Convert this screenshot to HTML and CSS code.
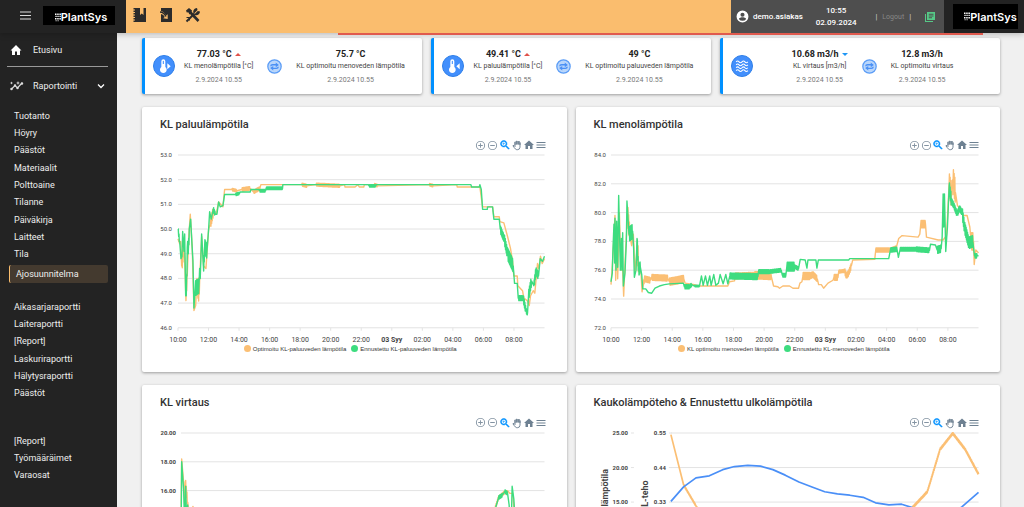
FILE: index.html
```html
<!DOCTYPE html>
<html lang="fi">
<head>
  <meta charset="UTF-8" />
  <meta name="viewport" content="width=device-width, initial-scale=1" />
  <title>PlantSys - Ajosuunnitelma</title>
  <link rel="stylesheet" href="styles.css">
</head>
<body>
  <!-- Shared icons -->
  <svg class="sprite" aria-hidden="true">
    <symbol id="i-dots" viewBox="0 0 6 9">
      <path d="M0 .5h1.5v1.5H0zM2.2 .5h1.5v1.5H2.2zM4.4 .5h1.5v1.5H4.4zM.4 2.8h1.3v1.3H.4zM2.4 2.8h1.3v1.3H2.4zM4.5 2.8h1.3v1.3H4.5zM0 5.1h1.5v1.5H0zM2.2 5.1h1.5v1.5H2.2zM4.4 5.1h1.5v1.5H4.4zM.6 7.3h1v1h-1zM2.6 7.3h1v1h-1z"/>
    </symbol>
    <symbol id="i-swap" viewBox="0 0 24 24">
      <circle cx="12" cy="12" r="10.7" fill="#b9d6fb" stroke="#5a9cf6" stroke-width="2"/>
      <path d="M5 11.500q0-3.500 4-3.500h5V5.500l5 4-5 3.500v-2.800H9q-2 0-2 1.300zM19 12.500q0 3.500-4 3.500h-5v2.500l-5-4 5-3.500v2.800h5q2 0 2-1.300z" fill="#4a90f5"/>
    </symbol>
    <symbol id="i-plus" viewBox="0 0 24 24">
      <path d="M13 7h-2v4H7v2h4v4h2v-4h4v-2h-4V7zm-1-5a10 10 0 1 0 0 20 10 10 0 0 0 0-20zm0 18a8 8 0 1 1 0-16 8 8 0 0 1 0 16z"/>
    </symbol>
    <symbol id="i-minus" viewBox="0 0 24 24">
      <path d="M7 11v2h10v-2H7zm5-9a10 10 0 1 0 0 20 10 10 0 0 0 0-20zm0 18a8 8 0 1 1 0-16 8 8 0 0 1 0 16z"/>
    </symbol>
    <symbol id="i-zoom" viewBox="0 0 24 24">
      <path d="M15.5 14h-.8l-.3-.3A6.5 6.5 0 1 0 13.7 14.4l.3.3v.8l5 5 1.5-1.5-5-5zm-6 0a4.5 4.5 0 1 1 0-9 4.5 4.5 0 0 1 0 9z" stroke="currentColor"/>
      <path d="M12 10h-2v2H9v-2H7V9h2V7h1v2h2v1z"/>
    </symbol>
    <symbol id="i-hand" viewBox="0 0 24 24">
      <path d="M8 12V5.500M11.300 11V3.500M14.600 11V4.500M18 12V7v9.500A5.500 5.500 0 0 1 12.500 21.500C9.500 21.500 8 19.500 3.800 13.500L6 12.800l2 2.400V6" fill="none" stroke="currentColor" stroke-width="1.900"/>
      <path d="M9 4h9v7H9z" opacity=".7"/>
    </symbol>
    <symbol id="i-home" viewBox="0 0 24 24">
      <path d="M10 20v-6h4v6h5v-8h3L12 3 2 12h3v8z"/>
    </symbol>
    <symbol id="i-menu" viewBox="0 0 24 24">
      <path d="M3 6h18v2H3zM3 11h18v2H3zM3 16h18v2H3z"/>
    </symbol>
    <symbol id="i-thermo" viewBox="0 0 24 24">
      <path d="M14 13.500V5a3 3 0 0 0-6 0v8.500a5 5 0 1 0 6 0zM10.200 5a.8.8 0 0 1 1.600 0v4h-1.600z"/>
    </symbol>
  </svg>

  <header class="topbar">
    <div class="topbar-left">
      <button class="icon-btn" aria-label="Valikko">
        <svg width="11" height="9" viewBox="0 0 11 9"><path d="M0 1h11M0 4.500h11M0 8h11" stroke="#ddd" stroke-width="1.200"/></svg>
      </button>
      <a class="logo" href="#"><svg width="6" height="9"><use href="#i-dots"/></svg>PlantSys</a>
    </div>
    <nav class="topbar-tools">
      <button class="icon-btn" aria-label="Päiväkirja">
        <svg width="14" height="16" viewBox="0 0 14 16">
          <path d="M2 1h5v7l1.800-1.500L10.500 8V1H13v14H2z" fill="#2b2b2b"/>
          <path d="M1.500 1v14" stroke="#2b2b2b" stroke-width="2" stroke-dasharray="1.500 1"/>
        </svg>
      </button>
      <button class="icon-btn" aria-label="Kirjaudu">
        <svg width="14" height="16" viewBox="0 0 14 16">
          <path d="M2 1h11v14H2z" fill="#2b2b2b"/>
          <path d="M0 4c3-.5 5 .8 7 4.500l1.700-1.200V12l-4.500-.8 1.600-1.200C4.500 7.500 3 6.500 0 7z" fill="#fabd6e"/>
          <path d="M1 5c3 0 4.500 1.500 6 4.500" stroke="#2b2b2b" stroke-width="1.400" fill="none"/>
        </svg>
      </button>
      <button class="icon-btn" aria-label="Työkalut">
        <svg width="16" height="16" viewBox="0 0 16 16">
          <path d="M5 5l8.500 9" stroke="#2b2b2b" stroke-width="2.600"/>
          <path d="M1.500 14.500l8-8" stroke="#2b2b2b" stroke-width="2"/>
          <path d="M9 6.500L12.500 3l-.5-2c-2.800.3-4.300 2.700-3.500 5zM9.500 7.300l3.300-3.300 2.200.5c0 2.500-2.700 4.300-5 3.500z" fill="#2b2b2b"/>
          <path d="M1 3.500L4 1l3 2.500-.8 2.500-1.700 1.500L3.300 5.200 1.800 5.500z" fill="#2b2b2b"/>
          <path d="M1.500 10.500h3v3" stroke="#2b2b2b" fill="none"/>
        </svg>
      </button>
    </nav>
    <div class="topbar-user">
      <div class="user">
        <svg width="13" height="13" viewBox="0 0 24 24"><path d="M12 1a11 11 0 1 0 0 22 11 11 0 0 0 0-22zm0 4a3.800 3.800 0 1 1 0 7.600A3.800 3.800 0 0 1 12 5zm0 15a8 8 0 0 1-6.700-3.500c0-2.200 4.500-3.300 6.700-3.300s6.700 1.100 6.700 3.300A8 8 0 0 1 12 20z" fill="#fff"/></svg>
        demo.asiakas
      </div>
      <div class="clock"><span>10:55</span><span>02.09.2024</span></div>
      <div class="logout"><span>|</span><button>Logout</button><span>|</span></div>
      <button class="icon-btn" aria-label="Kirjasto">
        <svg width="12" height="12" viewBox="0 0 24 24"><path d="M4 6H2v16h16v-2H4zM6 2v16h16V2zm13 5.500H9.500v-2H19zm0 3.500H9.500V9H19zm-3 3.500H9.500v-2H16z" fill="#55c987"/></svg>
      </button>
    </div>
    <div class="topbar-brand">
      <a class="logo" href="#"><svg width="6" height="9"><use href="#i-dots"/></svg>PlantSys</a>
    </div>
    <div class="loading"></div>
  </header>

  <div class="layout">
    <aside class="sidebar">
      <a class="nav-main" href="#">
        <svg width="12" height="12" viewBox="0 0 24 24"><path d="M10 22v-7h4v7h6v-9h3L12 2 1 13h3v9z" fill="#fff"/></svg>
        Etusivu
      </a>
      <hr>
      <button class="nav-main nav-group">
        <svg width="14" height="12" viewBox="0 0 28 24">
          <path d="M3 18l7-7 5 5 9-10" fill="none" stroke="#ddd" stroke-width="2.400"/>
          <path d="M0.500 18a2.500 2.500 0 1 0 5 0 2.500 2.500 0 1 0-5 0M7.500 11a2.500 2.500 0 1 0 5 0 2.500 2.500 0 1 0-5 0M12.500 16a2.500 2.500 0 1 0 5 0 2.500 2.500 0 1 0-5 0M21.500 7a2.500 2.500 0 1 0 5 0 2.500 2.500 0 1 0-5 0M16 2l1.200 2.800L20 6l-2.800 1.200L16 10l-1.200-2.800L12 6l2.800-1.200zM3 3l1 2 2 1-2 1-1 2-1-2-2-1 2-1z" fill="#ddd"/>
        </svg>
        <span>Raportointi</span>
        <svg width="8" height="6" viewBox="0 0 8 6"><path d="M1 1.500l3 3 3-3" fill="none" stroke="#fff" stroke-width="1.300"/></svg>
      </button>

      <nav class="menu menu-nine">
        <a href="#">Tuotanto</a>
        <a href="#">Höyry</a>
        <a href="#">Päästöt</a>
        <a href="#">Materiaalit</a>
        <a href="#">Polttoaine</a>
        <a href="#">Tilanne</a>
        <a href="#">Päiväkirja</a>
        <a href="#">Laitteet</a>
        <a href="#">Tila</a>
      </nav>
      <a class="menu-active" href="#">Ajosuunnitelma</a>
      <nav class="menu menu-six">
        <a href="#">Aikasarjaraportti</a>
        <a href="#">Laiteraportti</a>
        <a href="#">[Report]</a>
        <a href="#">Laskuriraportti</a>
        <a href="#">Hälytysraportti</a>
        <a href="#">Päästöt</a>
      </nav>
      <nav class="menu menu-three">
        <a href="#">[Report]</a>
        <a href="#">Työmääräimet</a>
        <a href="#">Varaosat</a>
      </nav>
    </aside>

    <main class="content">
      <!-- Current values -->
      <section class="kpis">
        <div class="kpi">
          <span class="kpi-icon"><svg width="16" height="16" viewBox="0 0 24 24"><use href="#i-thermo"/><path d="M17 8l5 4.500-5 4.500z"/></svg></span>
          <div class="kpi-body">
            <div class="kpi-value"><b>77.03 °C <i class="up"></i></b><span>KL menolämpötila [°C]</span><time>2.9.2024 10.55</time></div>
            <svg width="15" height="15"><use href="#i-swap"/></svg>
            <div class="kpi-value"><b>75.7 °C</b><span>KL optimoitu menoveden lämpötila</span><time>2.9.2024 10.55</time></div>
          </div>
        </div>
        <div class="kpi">
          <span class="kpi-icon"><svg width="16" height="16" viewBox="0 0 24 24"><use href="#i-thermo"/><path d="M22 8l-5 4.500 5 4.500z"/></svg></span>
          <div class="kpi-body">
            <div class="kpi-value"><b>49.41 °C <i class="up"></i></b><span>KL paluulämpötila [°C]</span><time>2.9.2024 10.55</time></div>
            <svg width="15" height="15"><use href="#i-swap"/></svg>
            <div class="kpi-value"><b>49 °C</b><span>KL optimoitu paluuveden lämpötila</span><time>2.9.2024 10.55</time></div>
          </div>
        </div>
        <div class="kpi">
          <span class="kpi-icon"><svg width="14" height="14" viewBox="0 0 24 24"><path d="M2 5q2.500-3 5 0t5 0 5 0 5 0M2 10q2.500-3 5 0t5 0 5 0 5 0M2 15q2.500-3 5 0t5 0 5 0 5 0M2 20q2.500-3 5 0t5 0 5 0 5 0" fill="none" stroke="#fff" stroke-width="1.900"/></svg></span>
          <div class="kpi-body">
            <div class="kpi-value"><b>10.68 m3/h <i class="down"></i></b><span>KL virtaus [m3/h]</span><time>2.9.2024 10.55</time></div>
            <svg width="15" height="15"><use href="#i-swap"/></svg>
            <div class="kpi-value"><b>12.8 m3/h</b><span>KL optimoitu virtaus</span><time>2.9.2024 10.55</time></div>
          </div>
        </div>
      </section>

      <!-- Filled in by charts.js -->
      <section class="charts" id="charts"></section>
    </main>
  </div>

  <script src="charts.js"></script>
</body>
</html>
```
FILE: styles.css
```css
:root {
  --dark: #232323;
  --orange: #fabd6e;
  --blue: #0090ff;
  --bg: #f0f0f0;
  --muted: #6e8192;
}
* {
  box-sizing: border-box;
}
body {
  margin: 0;
  height: 100vh;
  display: flex;
  flex-direction: column;
  overflow: hidden;
  background: var(--bg);
  color: #333;
  font-family: Roboto, "Liberation Sans", sans-serif;
  font-size: 8px;
}
a {
  color: inherit;
  text-decoration: none;
}
button {
  background: none;
  border: none;
  padding: 0;
  color: inherit;
  font: inherit;
  cursor: pointer;
}
svg {
  display: block;
  flex: none;
}
.sprite {
  display: none;
}

/* Top bar */
.topbar {
  position: relative;
  z-index: 2;
  display: flex;
  flex: none;
  height: 33px;
  background: var(--orange);
  box-shadow: 0 1px 6px rgba(0,0,0,0.25);
}
.topbar-left {
  display: flex;
  align-items: center;
  gap: 12px;
  width: 126px;
  padding-left: 20px;
  padding-bottom: 2px;
  background: var(--dark);
}
.logo {
  display: flex;
  align-items: center;
  justify-content: center;
  width: 72px;
  height: 19px;
  padding-left: 4px;
  padding-top: 3px;
  background: #000;
  color: #fff;
  fill: #fff;
  font-family: Inter, sans-serif;
  font-size: 11px;
  font-weight: 600;
}
.topbar-tools {
  display: flex;
  flex: 1;
  align-items: center;
  gap: 12px;
  padding: 0 7px 4px;
}
.topbar-user {
  display: flex;
  align-items: center;
  justify-content: space-between;
  width: 213px;
  padding: 0 8px 0 5px;
  background: #4e4e4e;
  color: #fff;
  font-weight: 500;
}
.user {
  display: flex;
  align-items: center;
  gap: 4px;
}
.clock {
  display: flex;
  flex-direction: column;
  padding-right: 6px;
  line-height: 12px;
  text-align: center;
}
.logout {
  display: flex;
  gap: 5px;
  color: #ccc;
  font-weight: 400;
}
.logout button {
  color: #888;
  font-size: 7px;
}
.topbar-brand {
  display: flex;
  align-items: center;
  width: 80px;
  padding-left: 9px;
  background: var(--dark);
}
.topbar-brand .logo {
  width: 65px;
  height: 25px;
  padding-left: 10px;
  padding-top: 0;
}
.loading {
  position: absolute;
  top: 33px;
  left: 33%;
  right: 4%;
  height: 2px;
  background: #e05a4e;
}

.layout {
  display: flex;
  flex: 1;
  min-height: 0;
}

/* Sidebar */
.sidebar {
  flex: none;
  width: 117px;
  background: var(--dark);
  color: #eee;
  font-size: 9px;
}
.sidebar hr {
  margin: 0 9px 0 7px;
  border: none;
  border-top: 1px solid #999;
}
.nav-main {
  display: flex;
  align-items: center;
  gap: 11px;
  width: 100%;
  height: 33px;
  padding: 0 12px 0 10px;
}
.nav-group {
  height: 38px;
  gap: 9px;
  text-align: left;
}
.nav-group span {
  flex: 1;
}
.menu {
  display: grid;
  grid-auto-rows: 1fr;
  align-items: center;
  padding-left: 14px;
}
.menu-nine {
  height: 156px;
  margin-top: 2px;
}
.menu-six {
  height: 104px;
  margin-top: 15px;
}
.menu-three {
  height: 52px;
  margin-top: 30px;
}
.menu-active {
  display: block;
  margin: 2px 9px 0;
  padding-left: 6px;
  border-left: 1px solid var(--orange);
  border-radius: 2px;
  background: #443a2f;
  line-height: 18px;
}

/* Content */
.content {
  flex: 1;
  padding: 5px 24px 13px 25px;
  overflow-y: auto;
  scrollbar-width: none;
}
.kpis {
  display: grid;
  grid-template-columns: repeat(3, 1fr);
  gap: 9px;
  margin-bottom: 13px;
}
.kpi, .chart {
  background: #fff;
  border-radius: 2px;
  box-shadow: 0 1px 3px rgba(0,0,0,0.35);
}
.kpi {
  display: flex;
  align-items: center;
  height: 56px;
  padding: 0 8px;
  border-left: 3px solid var(--blue);
}
.kpi-icon {
  display: grid;
  place-items: center;
  width: 22px;
  height: 22px;
  border: 1px solid #2f7fe8;
  border-radius: 50%;
  background: #428ffc;
  fill: #fff;
}
.kpi-body {
  display: flex;
  flex: 1;
  align-items: center;
  justify-content: center;
  gap: 14px;
}
.kpi-value {
  display: flex;
  flex-direction: column;
  align-items: center;
  padding-top: 3px;
  font-size: 7px;
  line-height: 12px;
  color: #444;
}
.kpi-value b {
  color: #222;
  font-size: 9px;
}
.kpi-value time {
  line-height: 16px;
  color: #777;
}
.up, .down {
  display: inline-block;
  margin-left: 1px;
  vertical-align: middle;
  border: 3px solid transparent;
}
.up {
  border-top: none;
  border-bottom-color: #e0524a;
}
.down {
  border-bottom: none;
  border-top-color: #1e96f5;
}

/* Charts */
.charts {
  display: grid;
  grid-template-columns: repeat(2, 1fr);
  gap: 13px 9px;
}
.chart {
  padding: 11px 18px 18px;
}
.chart h2 {
  margin: 0;
  font-size: 11px;
  font-weight: 500;
  line-height: 14px;
}
.toolbar {
  display: flex;
  justify-content: flex-end;
  height: 12px;
  margin-top: 7px;
  padding-right: 2px;
  color: var(--muted);
  fill: currentColor;
}
.toolbar button {
  display: grid;
  place-items: center;
  width: 12px;
}
.toolbar svg {
  width: 12px;
  height: 12px;
}
.toolbar .round {
  opacity: 0.85;
}
.toolbar .round svg {
  width: 11px;
  height: 11px;
}
.toolbar .selected {
  color: var(--blue);
  fill: var(--blue);
}
.plot {
  width: 100%;
  height: auto;
  overflow: visible;
}
.plot text {
  fill: #444;
  font-size: 6px;
}
.plot .hour {
  font-size: 7px;
}
.plot .strong {
  font-weight: 700;
}
.plot .axis-title {
  font-size: 9px;
  font-weight: 700;
}
.grid-line {
  stroke: #e3e3e3;
}
.series {
  fill: none;
  stroke-linejoin: round;
}
.legend {
  display: flex;
  justify-content: center;
  gap: 5px;
  padding-right: 8px;
  font-family: "Liberation Sans", sans-serif;
  font-size: 6px;
  line-height: 10px;
}
.legend span {
  display: flex;
  align-items: center;
  gap: 2px;
}
.legend i {
  width: 7px;
  height: 7px;
  border-radius: 50%;
}
```
FILE: charts.js
```js
const ORANGE = '#fbbf74';
const GREEN = '#3ddc7f';
const BLUE = '#4a8ff7';
const TOP = 4;       // y of the topmost grid line
const HEIGHT = 173;  // distance to the bottom one
const RIGHT = 385;
const HOURS = ['10:00', '12:00', '14:00', '16:00', '18:00', '20:00', '22:00', '03 Syy', '02:00', '04:00', '06:00', '08:00'];

// Points are [sample, value] or [sample, value, swing], 46 samples an hour.
// With a swing the line goes up and down by that much on its way to the point.
const charts = [
  {
    title: 'KL paluulämpötila', left: 18, samples: 1101,
    axes: [{ x: 12, min: 46, max: 53, step: 1, digits: 1 }],
    series: [
      { name: 'Optimoitu KL-paluuveden lämpötila', color: ORANGE, points: [
        [0, 49.6], [5, 49.4], [8, 49.5], [11, 48.5], [17, 49.2, .3], [20, 48.8], [24, 47.1], [29, 48.6, .2], [33, 49.8], [37, 50.6], [43, 49.2], [48, 46.7], [53, 46.9], [57, 48], [60, 47.2], [65, 47.9, .4], [71, 49.7], [77, 48.5], [84, 48.4], [92, 50], [97, 50.2], [106, 50.7, .2], [115, 50.6], [122, 51.1], [135, 50.9], [140, 51.6], [162, 51.6], [177, 51.55, .05], [192, 51.6], [217, 51.65, .07], [227, 51.5], [246, 51.65, .07], [249, 51.8], [372, 51.8], [387, 51.75, .06], [415, 51.8], [487, 51.75, .06], [500, 51.8], [502, 51.7], [532, 51.7], [540, 51.8], [545, 51.7], [558, 51.7], [560, 51.8], [590, 51.8], [600, 51.75, .05], [755, 51.8], [767, 51.75, .05], [837, 51.8], [839, 51.7], [907, 51.7], [915, 50.9], [945, 50.9], [949, 50.5], [965, 50.5], [967, 50.3], [979, 50.25], [990, 49.7], [999, 49.2], [1005, 48.7], [1009, 48.1], [1019, 48.1], [1021, 47.7], [1035, 47.5], [1039, 47.2], [1049, 47.1], [1055, 46.9], [1059, 47.3], [1067, 47.5], [1072, 47.4], [1080, 48.6], [1084, 48.4], [1089, 48.9], [1094, 48.6], [1101, 48.8]
      ] },
      { name: 'Ennustettu KL-paluuveden lämpötila', color: GREEN, points: [
        [0, 50], [5, 49.5, .1], [9, 48.8], [12, 48.9], [14, 49.9], [18, 49.1], [20, 49.8], [23, 47.3], [25, 47.3], [29, 49.5, .3], [31, 49], [34, 50, .3], [38, 50.4], [42, 49.4], [45, 48.7], [48, 46.8], [52, 47.6], [63, 47.7, .3], [65, 48.4], [67, 48], [71, 49.8], [77, 48.3], [80, 49.3, .3], [87, 49.1, .3], [92, 50], [95, 50.7], [100, 50.4], [106, 50.8], [112, 50.6, .1], [117, 50.6], [122, 51.1], [127, 50.9], [135, 50.95], [140, 51.4], [173, 51.4], [185, 51.45, .05], [187, 51.5], [217, 51.5], [219, 51.6], [243, 51.6], [245, 51.55], [263, 51.55, .05], [265, 51.65], [314, 51.65, .05], [315, 51.8], [572, 51.8], [574, 51.75], [594, 51.75, .05], [596, 51.8], [880, 51.8], [882, 51.7], [905, 51.7], [907, 51.8], [911, 51.6], [915, 50.8], [929, 50.8], [930, 50.9], [945, 50.9], [949, 50.4], [965, 50.4], [968, 50], [980, 49.6, .15], [990, 49, .2], [1007, 48.5, .25], [1011, 47.8], [1019, 47.8], [1022, 47.2], [1037, 47.2, .1], [1045, 46.7, .15], [1050, 46.6, .1], [1053, 47.3], [1062, 47.9, .2], [1069, 47.7], [1075, 48.3, .15], [1083, 48.1, .15], [1088, 48.8], [1095, 48.7], [1101, 48.9]
      ] }
    ]
  },
  {
    title: 'KL menolämpötila', left: 17, samples: 1101,
    axes: [{ x: 12, min: 72, max: 84, step: 2, digits: 1 }],
    series: [
      { name: 'KL optimoitu menoveden lämpötila', color: ORANGE, points: [
        [0, 75], [3, 75.9], [8, 78], [12, 79.8], [14, 75.3], [18, 79], [20, 75.4], [25, 80], [30, 76], [35, 76], [38, 74.2], [43, 77], [50, 80], [56, 78.5, .6], [62, 77.7], [67, 78.5], [72, 75.8], [78, 77.5], [83, 76.5, .8], [90, 75.8], [93, 74.5], [97, 75], [100, 75.4, .2], [118, 75.3, .2], [122, 75.5], [170, 75.45, .2], [175, 75.2], [200, 75.3, .25], [218, 75.4, .25], [222, 75.1], [250, 75], [262, 74.9], [350, 74.9], [355, 75.2], [370, 75.25], [372, 75.6], [430, 75.65, .2], [480, 75.6, .25], [487, 74.9], [500, 74.85], [505, 74.75], [515, 74.9], [535, 74.9], [545, 74.75], [562, 74.75], [566, 75.1], [572, 75.2], [575, 75.6], [597, 75.6, .25], [605, 75.7, .2], [618, 75.4, .2], [622, 75], [630, 75], [637, 74.75], [650, 75.1], [665, 75.3], [668, 75.5], [680, 75.5, .2], [682, 75.9], [700, 75.95, .1], [705, 75.6, .2], [712, 75.8, .2], [720, 76.3, .2], [724, 76.7], [790, 76.75], [793, 77.4], [835, 77.4, .15], [855, 77.6, .1], [862, 78.2], [872, 78.4], [920, 78.3], [925, 78.5], [928, 79.2], [942, 79.2, .25], [945, 78.3], [980, 78.1], [995, 78.1], [1005, 78.4], [1009, 80], [1013, 82], [1020, 81.2, .8], [1025, 82.3, .4], [1032, 81.4, .8], [1038, 80.5], [1045, 80.3], [1055, 79.8], [1067, 79.8], [1075, 79], [1079, 78], [1086, 78, .6], [1088, 76.4], [1093, 77.4], [1101, 77.2]
      ] },
      { name: 'Ennustettu KL-menoveden lämpötila', color: GREEN, points: [
        [0, 75.2], [4, 75.8], [6, 77.5], [9, 79.2], [11, 76.5], [12, 79.6], [15, 76], [17, 79.4], [20, 76.2], [23, 81.2], [28, 76], [31, 78.2], [33, 76], [35, 78.6], [37, 74.9], [42, 75.8], [46, 78], [48, 80.8], [54, 78.5], [65, 78.7, .5], [68, 77.5], [70, 75.5], [75, 76], [78, 78.2], [82, 76, .4], [88, 76.2, .4], [92, 75.7], [95, 74.7], [104, 74.7], [112, 74.45], [122, 74.4], [132, 74.75], [145, 74.9], [160, 75], [175, 75.05], [217, 75.1], [220, 74.85], [235, 74.85, .15], [242, 75, .12], [250, 74.9], [265, 74.9, .05], [271, 75.6], [276, 74.95], [283, 75.6], [289, 74.95], [296, 75.6], [300, 74.95], [308, 75.7], [314, 74.95], [322, 75.1], [327, 75.7], [336, 75.05], [344, 75.7], [350, 75.05], [356, 75.6], [440, 75.55, .2], [442, 75.9], [475, 75.9, .14], [510, 76, .12], [513, 75.65], [524, 75.65, .12], [527, 76.25], [550, 76.25, .3], [562, 76.1, .12], [567, 76.75], [582, 76.7], [587, 76.15], [590, 76.7], [614, 76.7], [617, 76.15], [621, 76.7], [712, 76.7], [715, 76.8], [832, 76.8], [837, 77.4], [857, 77.45, .15], [861, 76.9], [866, 77.45], [914, 77.45, .13], [954, 77.38, .16], [957, 77.8], [972, 77.75], [977, 77.4], [989, 77.5, .25], [992, 78.3], [995, 81.3], [997, 79], [999, 81.3], [1003, 77.3], [1008, 79], [1013, 81.8], [1020, 80.8, .4], [1027, 80.5, .2], [1037, 79.9, .2], [1044, 80.3, .2], [1052, 80, .2], [1059, 79, .4], [1072, 77.9, .4], [1084, 78, .4], [1089, 77], [1097, 77, .15], [1101, 77]
      ] }
    ]
  },
  {
    title: 'KL virtaus', left: 21, samples: 1091,
    axes: [{ x: 16, min: 8, max: 20, step: 2, digits: 2, strong: true }],
    series: [
      { name: 'KL optimoitu virtaus', color: ORANGE, points: [
        [0, 13], [2, 18.2], [8, 16.5], [11, 15], [13, 16.6], [20, 15.2, .3], [28, 13.8], [36, 14.9], [40, 14], [60, 12.5, .4], [120, 11.5], [400, 11.2, .1], [800, 12.5, .1], [930, 13.9], [943, 14.8], [953, 15.5, .1], [972, 15.9, .1], [980, 16], [987, 15.8], [995, 15.8], [1003, 14], [1020, 13, .4], [1091, 11.5, .3]
      ] },
      { name: 'Ennustettu KL-virtaus', color: GREEN, points: [
        [0, 12], [2, 18], [8, 16], [11, 13.5], [14, 16.3], [17, 13.8], [20, 15], [24, 13.6], [50, 12.5, .5], [120, 11.2, .2], [400, 11, .2], [800, 12.2, .2], [930, 13.8], [943, 14.7, .1], [953, 15.5], [965, 15.7, .12], [972, 15.95], [980, 15.8, .12], [985, 15], [988, 13.5], [992, 14.5], [994, 16.3], [999, 15.4], [1003, 13.8], [1020, 12.8, .4], [1091, 11, .3]
      ] }
    ]
  },
  {
    title: 'Kaukolämpöteho & Ennustettu ulkolämpötila', left: 77, samples: 920,
    axes: [
      { x: 34, min: 0, max: 25, step: 5, digits: 2, strong: true, title: 'Ennustettu ulkolämpötila', titleX: 14 },
      { x: 72, min: 0, max: .55, step: .11, digits: 2, strong: true, title: 'Ennustettu KL-teho', titleX: 54 }
    ],
    series: [
      { name: 'Ennustettu KL-teho', color: ORANGE, axis: 1, points: [
        [0, .545], [38, .385], [75, .318, .002], [120, .26], [300, .2], [600, .24], [722, .312], [767, .363, .003], [805, .498, .003], [843, .549, .003], [880, .498, .003], [920, .419, .003]
      ] },
      { name: 'Ennustettu ulkolämpötila', color: BLUE, points: [
        [0, 15.1], [38, 17.2], [75, 18.5], [115, 18.8], [155, 19.7], [190, 20.15], [230, 20.3], [268, 20.2], [305, 19.7], [342, 18.9], [383, 17.9], [422, 17.2], [460, 16.5], [498, 16.2], [535, 16], [575, 15.7], [612, 14.9], [652, 14.6], [690, 14.7], [722, 14.2], [790, 13.3], [850, 13.6], [870, 14.3], [920, 16.4]
      ] }
    ]
  }
];

function expand(points) {
  const out = [points[0]];
  for (let i = 1; i < points.length; i++) {
    const [x0, v0] = points[i - 1];
    const [x1, v1, swing] = points[i];
    if (swing) {
      let sign = 1;
      for (let x = x0 + 1; x < x1; x++) {
        const v = v0 + (v1 - v0) * (x - x0) / (x1 - x0);
        out.push([x, v + sign * swing]);
        sign = -sign;
      }
    }
    out.push([x1, v1]);
  }
  return out;
}

function drawAxis(axis, chart) {
  let html = '';
  const count = Math.round((axis.max - axis.min) / axis.step);
  for (let i = 0; i <= count; i++) {
    const y = TOP + HEIGHT * i / count;
    const value = axis.max - i * axis.step;
    html += `<text x="${axis.x}" y="${y + 2}" text-anchor="end" class="${axis.strong ? 'strong' : ''}">${Math.abs(value).toFixed(axis.digits)}</text>`;
    if (axis.title) html += `<path class="grid-line" d="M${axis.x + 3} ${y}h3"/>`;
    if (axis === chart.axes[0]) html += `<path class="grid-line" d="M${chart.left} ${y}H${RIGHT}"/>`;
  }
  if (axis.title) {
    html += `<text class="axis-title" text-anchor="middle" transform="translate(${axis.titleX} ${TOP + HEIGHT / 2}) rotate(-90)">${axis.title}</text>`;
  }
  return html;
}

function drawSeries(series, chart) {
  const axis = chart.axes[series.axis || 0];
  const line = expand(series.points).map(([x, v]) => {
    const px = chart.left + x * (RIGHT - chart.left) / chart.samples;
    const py = TOP + (axis.max - v) * HEIGHT / (axis.max - axis.min);
    return px.toFixed(1) + ',' + py.toFixed(1);
  });
  return `<polyline class="series" stroke="${series.color}" stroke-width="${chart.axes.length > 1 ? 1.7 : 1.4}" points="${line.join(' ')}"/>`;
}

function drawHours(chart) {
  const step = (RIGHT - chart.left) / 12;
  return HOURS.map((hour, i) => {
    const x = chart.left + i * step;
    return `<path class="grid-line" d="M${x} ${TOP + HEIGHT}v3"/>
      <text class="hour ${hour.includes('Syy') ? 'strong' : ''}" x="${x}" y="191" text-anchor="middle">${hour}</text>`;
  }).join('');
}

const tools = [
  ['plus', 'Lähennä', 'round'],
  ['minus', 'Loitonna', 'round'],
  ['zoom', 'Valitse alue', 'selected'],
  ['hand', 'Siirrä', ''],
  ['home', 'Palauta', ''],
  ['menu', 'Valikko', '']
];

document.getElementById('charts').innerHTML = charts.map(chart => `
  <article class="chart">
    <h2>${chart.title.replace('&', '&amp;')}</h2>
    <div class="toolbar">
      ${tools.map(([id, label, cls]) => `<button class="${cls}" aria-label="${label}"><svg><use href="#i-${id}"/></svg></button>`).join('')}
    </div>
    <svg class="plot" viewBox="0 0 389 193">
      ${chart.axes.map(axis => drawAxis(axis, chart)).join('')}
      ${drawHours(chart)}
      ${chart.series.map(series => drawSeries(series, chart)).join('')}
    </svg>
    <div class="legend">
      ${chart.series.map(s => `<span><i style="background:${s.color}"></i>${s.name}</span>`).join('')}
    </div>
  </article>
`).join('');
```
